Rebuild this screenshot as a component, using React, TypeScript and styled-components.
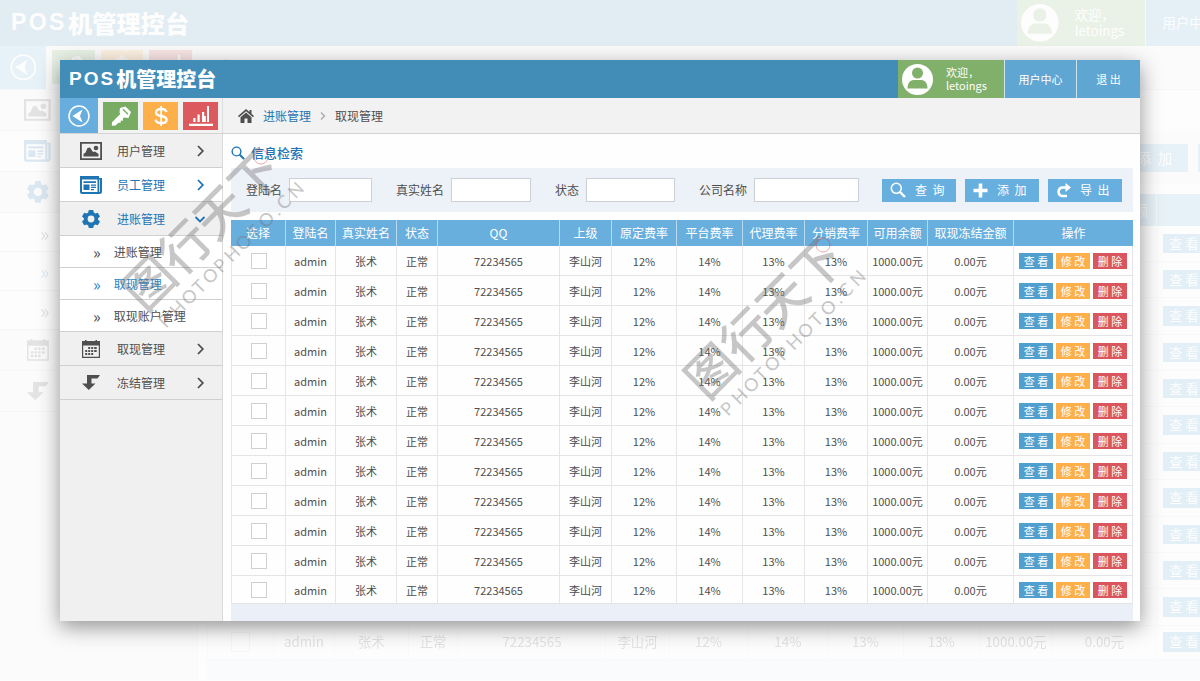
import React, { useId } from 'react';
import styled, { createGlobalStyle, css } from 'styled-components';

const blue = '#1f74b4';
const ink = '#4f4f4f';

const GlobalStyle = createGlobalStyle`
  * { box-sizing: border-box; }
  body {
    margin: 0;
    background: #fdfdfd;
    color: ${ink};
    font-family: 'Noto Sans CJK SC', 'Noto Sans', sans-serif;
    font-size: 12px;
    line-height: 16px;
  }
  button, input { font: inherit; color: inherit; }
  button { border: 0; padding: 0; cursor: pointer; }
  a { color: inherit; text-decoration: none; }
  svg { display: block; flex: none; }
`;

const Stage = styled.div`
  position: relative;
  min-height: 100vh;
  padding: 60px 5vw;
  overflow: hidden;
`;

const Backdrop = styled.div`
  position: absolute;
  inset: 0;
  overflow: hidden;
  opacity: 0.15;
`;

const BackdropScale = styled.div`
  width: 90vw;
  zoom: 1.213;
`;

const Floating = styled.div`
  position: relative;
  box-shadow: 0 6px 20px rgba(0, 0, 0, 0.42);
`;

const Shell = styled.div`
  display: flex;
  flex-direction: column;
  background: #fefefe;
`;

const TopBar = styled.header`
  display: flex;
  height: 38px;
  background: #428cb8;
  color: #fff;
`;

const Brand = styled.h1`
  display: flex;
  align-items: center;
  gap: 3px;
  margin: 0;
  padding-left: 9px;
  flex: 1;
  font-size: 20px;
  line-height: 24px;
  font-weight: 900;
`;

const Latin = styled.span`
  display: flex;
  gap: 2px;
  font-family: 'Liberation Sans', sans-serif;
  font-size: 19px;
  font-weight: 700;
`;

const UserCard = styled.div`
  display: flex;
  align-items: center;
  gap: 13px;
  width: 106px;
  padding-left: 4px;
  background: #80b06a;
  font-size: 11px;
  line-height: 13px;
`;

const TopButton = styled.button<{ $width: number }>`
  width: ${(p) => p.$width}px;
  border-left: 1px solid #cfe4f1;
  background: #5fa6d2;
  font-size: 11px;
`;

const SubBar = styled.div`
  display: flex;
  height: 36px;
  background: #f2f2f2;
  border-bottom: 1px solid #d4d4d4;
`;

const Tools = styled.div`
  display: flex;
  align-items: center;
  gap: 5px;
  width: 163px;
  border-right: 1px solid #dcdcdc;
`;

const Toggle = styled.button`
  display: grid;
  place-items: center;
  align-self: stretch;
  width: 38px;
  background: #67addd;
`;

const Tool = styled.button<{ $color: string }>`
  display: grid;
  place-items: center;
  width: 35px;
  height: 28px;
  background: ${(p) => p.$color};
`;

const Crumbs = styled.nav`
  display: flex;
  align-items: center;
  gap: 9px;
  padding-left: 15px;
`;

const CrumbLink = styled.a`
  color: ${blue};
`;

const Body = styled.div`
  display: flex;
`;

const Sidebar = styled.nav`
  width: 163px;
  flex: none;
  background: #f0f0f0;
  border-right: 1px solid #dadada;
`;

const MenuItem = styled.a<{ $active?: boolean; $white?: boolean }>`
  display: flex;
  align-items: center;
  height: 34px;
  padding: 0 16px 0 20px;
  gap: 15px;
  border-bottom: 1px solid #d0d0d0;
  background: ${(p) => (p.$white ? '#fff' : 'transparent')};
  color: ${(p) => (p.$active ? blue : ink)};
`;

const IconSlot = styled.span`
  display: grid;
  place-items: center;
  width: 22px;
`;

const Grow = styled.span`
  flex: 1;
`;

const SubItem = styled.a<{ $active?: boolean }>`
  display: flex;
  align-items: center;
  gap: 13px;
  height: 32px;
  padding-left: 33px;
  border-bottom: 1px solid #d0d0d0;
  background: #fff;
  color: ${(p) => (p.$active ? '#2a86c8' : ink)};
`;

const Guillemet = styled.span`
  font-size: 16px;
`;

const Content = styled.main`
  flex: 1;
  min-width: 0;
  padding: 0 7px 0 8px;
`;

const SectionTitle = styled.h2`
  display: flex;
  align-items: center;
  gap: 6px;
  height: 34px;
  margin: 0;
  padding-top: 4px;
  color: ${blue};
  font-size: 13px;
  font-weight: 500;
`;

const SearchPanel = styled.form`
  display: flex;
  align-items: center;
  justify-content: space-between;
  height: 44px;
  padding: 0 11px 0 15px;
  background: #edf1f8;
`;

const Group = styled.div<{ $gap: number }>`
  display: flex;
  gap: ${(p) => p.$gap}px;
`;

const Field = styled.div`
  display: flex;
  align-items: center;
  gap: 7px;
`;

const TextBox = styled.input<{ $width: number }>`
  width: ${(p) => p.$width}px;
  height: 24px;
  padding: 0 4px;
  border: 1px solid #cdd0d6;
  background: #fff;
`;

const ActionButton = styled.button`
  display: flex;
  align-items: center;
  gap: 9px;
  width: 74px;
  height: 23px;
  padding-left: 8px;
  background: #66afdf;
  color: #fff;
  white-space: pre;
`;

const Grid = styled.table`
  width: 100%;
  margin-top: 8px;
  table-layout: fixed;
  border-collapse: separate;
  border-spacing: 0;
  text-align: center;
`;

const HeadCell = styled.th`
  height: 26px;
  padding: 0;
  background: #69afde;
  border-right: 1px solid #b9d9ef;
  color: #fff;
  font-weight: 400;
  white-space: nowrap;
  &:last-child { border-right: 0; }
`;

const cellLine = css`
  border-right: 1px solid #e6e6e8;
  border-bottom: 1px solid #e4e4e6;
`;

const Cell = styled.td`
  height: 30px;
  padding: 0;
  font-size: 11px;
  white-space: nowrap;
  ${cellLine}
  &:first-child { border-left: 1px solid #e6e6e8; }
  tr:last-child > & { height: 28px; }
`;

const Tick = styled.input`
  display: block;
  appearance: none;
  width: 16px;
  height: 16px;
  margin: 0 auto;
  border: 1px solid #cfcfcf;
  background: #fff;
`;

const RowActions = styled.div`
  display: flex;
  justify-content: center;
  gap: 3px;
`;

const RowButton = styled.button<{ $color: string }>`
  width: 34px;
  height: 16px;
  background: ${(p) => p.$color};
  color: #fff;
  font-size: 11px;
  line-height: 16px;
`;

const TableFoot = styled.div`
  height: 17px;
  background: #ebf0f8;
`;

const Watermark = styled.svg<{ $left: number; $top: number }>`
  position: absolute;
  left: ${(p) => p.$left}px;
  top: ${(p) => p.$top}px;
  pointer-events: none;
  fill: #6e6e6e;
  opacity: 0.38;
`;

const MarkName = styled.text`
  font-family: 'Noto Sans CJK SC', sans-serif;
  font-size: 50px;
  font-weight: 500;
`;

const MarkSite = styled.text`
  font-family: Lato, sans-serif;
  font-size: 18px;
`;

const Chevron = ({ down }: { down?: boolean }) => (
  <svg width="12" height="12" viewBox="0 0 12 12" fill="none" stroke="currentColor" strokeWidth="1.800">
    <path d={down ? 'M1.5 4l4.5 4.5L10.500 4' : 'M4 1L8.800 6 4 11'} />
  </svg>
);

const PictureIcon = () => (
  <svg width="22" height="18" viewBox="0 0 22 18" fill="currentColor">
    <path fillRule="evenodd" d="M0 0h22v18H0zM1.800 1.800v14.400h18.400V1.800z" />
    <path d="M3.500 14.500v-2.500l2-1.500 2-4.500 2.500-.5 3 4.500 2-.5 3.500 2.500v2.500z" />
    <circle cx="16" cy="6" r="2.300" />
  </svg>
);

const NewsIcon = () => (
  <svg width="22" height="18" viewBox="0 0 22 18" fill="currentColor">
    <path fillRule="evenodd" d="M0 0h19v2h3v13.500a2.500 2.500 0 0 1-2.500 2.500H2a2 2 0 0 1-2-2zM2 3.500V16h15.500V3.500zM19.300 3.500V16h.7V3.500z" />
    <path d="M3.500 5.200h12.500v1.800H3.500zM3.500 8.500h6V14h-6zM11 8.500h5v1.300h-5zM11 10.700h5V12h-5zM11 13h3v1.200h-3z" />
  </svg>
);

const GearIcon = () => (
  <svg width="18" height="18" viewBox="0 0 18 18" fill="currentColor">
    <path
      fillRule="evenodd"
      d="M6.800 0h4.400l.6 2.600 1.500.9 2.500-.8L18 6.500l-1.900 1.800v1.400L18 11.500l-2.200 3.800-2.500-.8-1.500.9-.6 2.600H6.800l-.6-2.600-1.500-.9-2.500.8L0 11.500l1.900-1.800V8.300L0 6.500l2.200-3.800 2.500.8 1.500-.9zM9 5.600a3.400 3.400 0 1 0 0 6.800 3.400 3.400 0 0 0 0-6.800z"
    />
  </svg>
);

const CalendarIcon = () => (
  <svg width="18" height="18" viewBox="0 0 18 18" fill="currentColor">
    <path fillRule="evenodd" d="M0 1h3V0h1.500v1h9V0H15v1h3v17H0zM1.200 5.500v11.300h15.600V5.500z" />
    <path d="M6.200 7h2v2h-2zM9.200 7h2v2h-2zM12.200 7h2.500v2h-2.500zM3.200 10h2v2h-2zM6.200 10h2v2h-2zM9.200 10h2v2h-2zM12.200 10h2.500v2h-2.500zM3.200 13h2v2h-2zM6.200 13h2v2h-2zM9.200 13h2v2h-2z" />
  </svg>
);

const TurnIcon = () => (
  <svg width="18" height="15" viewBox="0 0 18 15" fill="currentColor">
    <path d="M5 0H18l-2.500 3.500H9.500V8.500h4L6.800 15 0 8.500h5z" />
  </svg>
);

const BackIcon = () => (
  <svg width="22" height="22" viewBox="0 0 22 22">
    <circle cx="11" cy="11" r="10" fill="none" stroke="#fff" strokeWidth="1.500" />
    <path d="M14.500 4.500L4.500 11l10 6.500-2.500-6.500z" fill="#fff" />
  </svg>
);

const KeyIcon = () => (
  <svg width="22" height="22" viewBox="0 0 22 22" fill="#fff">
    <path
      fillRule="evenodd"
      d="M10 3L15.500 1.500 21 7l-2.500 6-4.500-.5-1.200 1.200.2 2-2.200-.2-.2 2.200-2.200 0-2.800 2.800-3.800.3.200-3.500L10.300 9 9.500 7.500zM13.500 3.800l-1 1 5 5 1-1z"
    />
  </svg>
);

const DollarIcon = () => (
  <svg width="16" height="22" viewBox="0 0 16 22" fill="none" stroke="#fff" strokeWidth="2.300">
    <path d="M13.500 7c-.5-2-2.500-3-5.300-3C5.200 4 3 5.200 3 7.400c0 2.400 2.300 3 5.200 3.600 3 .6 5.400 1.300 5.400 3.700 0 2.300-2.400 3.400-5.300 3.400-3.200 0-5.300-1.200-5.800-3.300" />
    <path d="M8.200 1v20" strokeWidth="1.800" />
  </svg>
);

const ChartIcon = () => (
  <svg width="24" height="20" viewBox="0 0 24 20" fill="#fff">
    <path d="M0 17.800h24V20H0zM4.300 12h2.200v4H4.300zM8.500 8.500h2.200V16H8.500zM13 6h2.200v10H13zM15.200 10h1.600v6h-1.600zM18 0h2v16h-2z" />
  </svg>
);

const HomeIcon = () => (
  <svg width="16" height="14" viewBox="0 0 16 14" fill="currentColor">
    <path d="M8 0l3.500 3V1h2v3.800L16 7l-1 1.200L8 2.300 1 8.200 0 7z" />
    <path d="M8 3.600l5.500 4.600V14H9.500V9.500h-3V14h-4V8.200z" />
  </svg>
);

const SearchIcon = ({ size }: { size: number }) => (
  <svg width={size} height={size} viewBox="0 0 16 16" fill="none" stroke="currentColor" strokeWidth="1.600">
    <circle cx="6.300" cy="6.300" r="5" />
    <path d="M10 10l5 5" strokeWidth="2.400" />
  </svg>
);

const PlusIcon = () => (
  <svg width="15" height="15" viewBox="0 0 15 15" fill="currentColor">
    <path d="M5.700 0.500h3.600v5.200h5.200v3.600H9.300v5.200H5.700V9.300H.5V5.700h5.200z" />
  </svg>
);

const ExportIcon = () => (
  <svg width="15" height="15" viewBox="0 0 15 15">
    <path d="M11 4.500H6.200a4.300 4.300 0 0 0 0 8.500h4.800" fill="none" stroke="currentColor" strokeWidth="2.600" />
    <path d="M9.500 0l5.500 4.500-5.500 4.500z" fill="currentColor" />
  </svg>
);

const Avatar = () => (
  <svg width="31" height="31" viewBox="0 0 31 31">
    <circle cx="15.500" cy="15.500" r="15.500" fill="#fff" />
    <circle cx="15.500" cy="9" r="5.500" fill="#80b06a" />
    <path d="M5.500 24.500c0-5 2.500-8.500 6-8.500h8c3.500 0 6 3.500 6 8.500z" fill="#80b06a" />
  </svg>
);

const columns: [string, number][] = [
  ['选择', 55], ['登陆名', 50], ['真实姓名', 61], ['状态', 41], ['QQ', 122], ['上级', 52], ['原定费率', 65],
  ['平台费率', 66], ['代理费率', 62], ['分销费率', 63], ['可用余额', 60], ['取现冻结金额', 86], ['操作', 119],
];

const record = ['admin', '张术', '正常', '72234565', '李山河', '12%', '14%', '13%', '13%', '1000.00元', '0.00元'];
const rows = Array.from({ length: 12 }, (_, i) => ({ key: i, values: record }));

const fields: [string, number][] = [['登陆名', 83], ['真实姓名', 80], ['状态', 89], ['公司名称', 105]];

function Console() {
  const id = useId();
  return (
    <Shell>
      <TopBar>
        <Brand><Latin><span>P</span><span>O</span><span>S</span></Latin>机管理控台</Brand>
        <UserCard>
          <Avatar />
          <div>欢迎，<br />letoings</div>
        </UserCard>
        <TopButton $width={72}>用户中心</TopButton>
        <TopButton $width={64}>退 出</TopButton>
      </TopBar>
      <SubBar>
        <Tools>
          <Toggle aria-label="收起菜单"><BackIcon /></Toggle>
          <Tool $color="#78ac62" aria-label="密钥"><KeyIcon /></Tool>
          <Tool $color="#fdb04a" aria-label="账务"><DollarIcon /></Tool>
          <Tool $color="#dc5a5e" aria-label="统计"><ChartIcon /></Tool>
        </Tools>
        <Crumbs aria-label="路径">
          <HomeIcon />
          <CrumbLink href="#income">进账管理</CrumbLink>
          <svg width="6" height="8" viewBox="0 0 6 8" fill="none" stroke="#a8a8a8" strokeWidth="1.300">
            <path d="M1 .5L4.500 4 1 7.500" />
          </svg>
          <span>取现管理</span>
        </Crumbs>
      </SubBar>
      <Body>
        <Sidebar aria-label="主菜单">
          <MenuItem href="#users"><IconSlot><PictureIcon /></IconSlot><Grow>用户管理</Grow><Chevron /></MenuItem>
          <MenuItem href="#staff" $active $white><IconSlot><NewsIcon /></IconSlot><Grow>员工管理</Grow><Chevron /></MenuItem>
          <MenuItem href="#income" $active><IconSlot><GearIcon /></IconSlot><Grow>进账管理</Grow><Chevron down /></MenuItem>
          <SubItem href="#income-list"><Guillemet>»</Guillemet>进账管理</SubItem>
          <SubItem href="#withdraw-list" $active><Guillemet>»</Guillemet>取现管理</SubItem>
          <SubItem href="#withdraw-accounts"><Guillemet>»</Guillemet>取现账户管理</SubItem>
          <MenuItem href="#withdraw"><IconSlot><CalendarIcon /></IconSlot><Grow>取现管理</Grow><Chevron /></MenuItem>
          <MenuItem href="#freeze"><IconSlot><TurnIcon /></IconSlot><Grow>冻结管理</Grow><Chevron /></MenuItem>
        </Sidebar>
        <Content>
          <SectionTitle><SearchIcon size={14} />信息检索</SectionTitle>
          <SearchPanel onSubmit={(e) => e.preventDefault()}>
            <Group $gap={24}>
              {fields.map(([name, width]) => (
                <Field key={name}>
                  <label htmlFor={id + name}>{name}</label>
                  <TextBox id={id + name} type="text" $width={width} />
                </Field>
              ))}
            </Group>
            <Group $gap={9}>
              <ActionButton type="submit"><SearchIcon size={16} />{'查  询'}</ActionButton>
              <ActionButton type="button"><PlusIcon />{'添  加'}</ActionButton>
              <ActionButton type="button"><ExportIcon />{'导  出'}</ActionButton>
            </Group>
          </SearchPanel>
          <Grid>
            <colgroup>
              {columns.map(([name, width]) => <col key={name} width={width} />)}
            </colgroup>
            <thead>
              <tr>{columns.map(([name]) => <HeadCell key={name} scope="col">{name}</HeadCell>)}</tr>
            </thead>
            <tbody>
              {rows.map((row) => (
                <tr key={row.key}>
                  <Cell><Tick type="checkbox" aria-label="选择" /></Cell>
                  {row.values.map((value, i) => <Cell key={i}>{value}</Cell>)}
                  <Cell>
                    <RowActions>
                      <RowButton $color="#519fce">查 看</RowButton>
                      <RowButton $color="#fdb04a">修 改</RowButton>
                      <RowButton $color="#d9565c">删 除</RowButton>
                    </RowActions>
                  </Cell>
                </tr>
              ))}
            </tbody>
          </Grid>
          <TableFoot />
        </Content>
      </Body>
    </Shell>
  );
}

const Mark = ({ left, top }: { left: number; top: number }) => (
  <Watermark $left={left} $top={top} width="200" height="190" viewBox="0 0 200 190" aria-hidden="true">
    <g transform="translate(48 181) rotate(-45)">
      <MarkName x="-4" y="-26">图行天下</MarkName>
      <MarkSite x="0 16 32 48 62 78 93 109 126 141 159 167 183" y="0">PHOTOPHOTO.CN</MarkSite>
    </g>
    <circle cx="143" cy="9" r="7" fill="none" stroke="#e02020" />
  </Watermark>
);

export default function App() {
  return (
    <>
      <GlobalStyle />
      <Stage>
        <Backdrop aria-hidden="true" inert>
          <BackdropScale><Console /></BackdropScale>
        </Backdrop>
        <Floating>
          <Console />
          <Mark left={58} top={88} />
          <Mark left={620} top={176} />
        </Floating>
      </Stage>
    </>
  );
}
